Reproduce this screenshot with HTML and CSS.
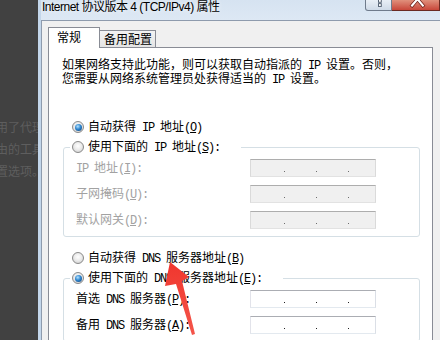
FILE: index.html
```html
<!DOCTYPE html>
<html lang="zh-CN">
<head>
<meta charset="utf-8">
<title>Internet 协议版本 4 (TCP/IPv4) 属性</title>
<link rel="stylesheet" href="styles.css">
</head>
<body>
<div class="screen">
  <div class="bg-strip">
    <p class="bg-line">使用了代理</p>
    <p class="bg-line">自由的工具</p>
    <p class="bg-line">设置选项。</p>
  </div>
  <div class="window">
    <div class="titlebar">
      <span class="title">Internet 协议版本 4 (TCP/IPv4) 属性</span>
      <span class="btn-help"><svg width="27" height="11" viewBox="0 0 27 11"><rect x="13.5" y="-1" width="3" height="3" fill="#fff" stroke="#4d5a6c" stroke-width="1"/><rect x="13.5" y="3.5" width="3" height="3" fill="#fff" stroke="#4d5a6c" stroke-width="1"/></svg></span>
      <span class="btn-close"><svg width="48" height="11" viewBox="0 0 48 11"><path d="M26 -1 L20.5 5.5 M26 -1 L31.5 5.5" stroke="#6b1e16" stroke-width="3.6" stroke-linecap="square" fill="none"/><path d="M26 -1 L20.5 5.5 M26 -1 L31.5 5.5" stroke="#ffffff" stroke-width="2.2" stroke-linecap="square" fill="none"/></svg></span>
    </div>
    <div class="client">
      <div class="tabs">
        <div class="tab-active">常规</div>
        <div class="tab">备用配置</div>
      </div>
      <div class="panel">
        <p class="desc">如果网络支持此功能，则可以获取自动指派的<span class="lat"> IP </span>设置。否则，<br>您需要从网络系统管理员处获得适当的<span class="lat"> IP </span>设置。</p>

        <div class="radio-row first"><span class="radio on"></span><span>自动获得<span class="lat"> IP </span>地址<span class="lat">(<u>O</u>)</span></span></div>

        <fieldset class="group">
          <legend class="legend"><span class="radio"></span><span>使用下面的<span class="lat"> IP </span>地址<span class="lat">(<u>S</u>):</span></span></legend>
          <div class="fields disabled">
            <span class="label"><span class="lat">IP </span>地址<span class="lat">(<u>I</u>):</span></span>
            <span class="ipbox off"><i class="dot"></i><i class="dot"></i><i class="dot"></i></span>
            <span class="label">子网掩码<span class="lat">(<u>U</u>):</span></span>
            <span class="ipbox off"><i class="dot"></i><i class="dot"></i><i class="dot"></i></span>
            <span class="label">默认网关<span class="lat">(<u>D</u>):</span></span>
            <span class="ipbox off"><i class="dot"></i><i class="dot"></i><i class="dot"></i></span>
          </div>
        </fieldset>

        <div class="radio-row second"><span class="radio"></span><span>自动获得<span class="lat"> DNS </span>服务器地址<span class="lat">(<u>B</u>)</span></span></div>

        <fieldset class="group">
          <legend class="legend"><span class="radio on"></span><span>使用下面的<span class="lat"> DNS </span>服务器地址<span class="lat">(<u>E</u>):</span></span></legend>
          <div class="fields">
            <span class="label">首选<span class="lat"> DNS </span>服务器<span class="lat">(<u>P</u>):</span></span>
            <span class="ipbox"><i class="dot"></i><i class="dot"></i><i class="dot"></i></span>
            <span class="label">备用<span class="lat"> DNS </span>服务器<span class="lat">(<u>A</u>):</span></span>
            <span class="ipbox"><i class="dot"></i><i class="dot"></i><i class="dot"></i></span>
          </div>
        </fieldset>
      </div>
    </div>
  </div>
  <svg class="arrow" width="440" height="340" viewBox="0 0 440 340">
    <defs>
      <linearGradient id="ag" x1="0" y1="0" x2="0" y2="1">
        <stop offset="0" stop-color="#f0362e"/>
        <stop offset="1" stop-color="#f4554a"/>
      </linearGradient>
    </defs>
    <polygon points="170,262 189,277 182,281 195,334 192,335 176,284 165,286" fill="url(#ag)"/>
  </svg>
</div>
</body>
</html>
```

FILE: styles.css
```css
html, body {
  margin: 0;
  padding: 0;
}
body {
  width: 440px;
  height: 340px;
  overflow: hidden;
  background: #414141;
  font-family: "Noto Sans CJK SC", sans-serif;
  font-size: 12px;
  color: #000;
}
.screen {
  position: relative;
  display: flex;
  width: 440px;
  height: 340px;
  overflow: hidden;
}
.bg-strip {
  width: 38px;
  flex: none;
  overflow: hidden;
  background: #414141;
  padding-top: 116px;
  box-sizing: border-box;
}
.bg-line {
  margin: 0 0 0 -16px;
  white-space: nowrap;
  font-size: 12px;
  line-height: 22px;
  color: #5e5e5e;
}
.window {
  flex: 1;
  display: flex;
  flex-direction: column;
  border-left: 3px solid #c3d6ea;
  min-width: 0;
}
.titlebar {
  height: 20px;
  flex: none;
  display: flex;
  align-items: flex-start;
  background: linear-gradient(#d6e3f1, #dde8f4);
  padding-left: 1px;
  box-sizing: border-box;
  overflow: hidden;
}
.title {
  font-family: "Liberation Sans", "Noto Sans CJK SC", sans-serif;
  font-size: 12px;
  line-height: 14px;
  letter-spacing: -0.5px;
  white-space: nowrap;
  color: #000;
  text-shadow: 0 0 5px #ffffff;
}
.btn-help {
  margin-left: auto;
  width: 27px;
  height: 11px;
  flex: none;
  box-sizing: border-box;
  border: 1px solid #6f7b8c;
  border-top: none;
  border-radius: 0 0 0 3px;
  background: linear-gradient(#e9eff6, #cfdae7);
  display: flex;
}
.btn-help svg, .btn-close svg {
  display: block;
}
.btn-close {
  width: 48px;
  height: 11px;
  flex: none;
  box-sizing: border-box;
  border: 1px solid #6b2a22;
  border-top: none;
  border-left: none;
  background: linear-gradient(#e0907c, #c8473a);
  display: flex;
}
.client {
  flex: 1;
  display: flex;
  flex-direction: column;
  background: #f0f0f0;
  border-top: 1px solid #8e9bad;
  border-left: 1px solid #8e9bad;
  padding: 6px 0 0 6px;
  min-height: 0;
}
.tabs {
  display: flex;
  align-items: flex-start;
  height: 21px;
  flex: none;
  margin-bottom: -1px;
  position: relative;
  z-index: 1;
}
.tab-active {
  width: 52px;
  height: 21px;
  box-sizing: border-box;
  border: 1px solid #898c95;
  border-bottom: none;
  background: #ffffff;
  padding: 3px 0 0 8px;
  line-height: 12px;
}
.tab {
  width: 56px;
  height: 17px;
  margin-top: 3px;
  box-sizing: border-box;
  border: 1px solid #898c95;
  border-left: none;
  border-bottom: none;
  background: linear-gradient(#f3f3f3, #e4e4e4);
  padding: 2px 0 0 4px;
  line-height: 12px;
}
.panel {
  width: 385px;
  flex: 1;
  box-sizing: border-box;
  background: #ffffff;
  border: 1px solid #898c95;
  border-bottom: none;
}
.desc {
  margin: 10px 0 0 13px;
  line-height: 12px;
  white-space: nowrap;
}
.lat {
  font-family: "Liberation Mono", monospace;
  font-size: 12px;
  letter-spacing: -1.2px;
}
.radio-row {
  display: flex;
  align-items: center;
  gap: 4px;
  height: 16px;
  margin-left: 23px;
  line-height: 12px;
  white-space: nowrap;
}
.radio-row.first {
  margin-top: 33px;
}
.radio-row.second {
  margin-top: 13px;
}
.radio {
  width: 12px;
  height: 12px;
  flex: none;
  box-sizing: border-box;
  border-radius: 50%;
  border: 1px solid #8a8a8a;
  background: radial-gradient(circle at 50% 40%, #ffffff 0%, #ececec 45%, #c9c9c9 100%);
  display: flex;
  align-items: center;
  justify-content: center;
}
.radio.on::after {
  content: "";
  width: 7px;
  height: 7px;
  border-radius: 50%;
  background: radial-gradient(circle at 40% 35%, #b4e3ff 0%, #2f86cf 45%, #0b3a6e 100%);
}
.group {
  margin: 4px 0 0 14px;
  width: 357px;
  box-sizing: border-box;
  border: 1px solid #d5dfe5;
  border-radius: 3px;
  padding: 0 0 6px 0;
  min-width: 0;
}
.legend {
  margin-left: 6px;
  padding: 0 21px 0 2px;
  height: 16px;
  display: flex;
  align-items: center;
  gap: 4px;
  line-height: 12px;
  white-space: nowrap;
}
.fields {
  display: grid;
  grid-template-columns: 174px 126px;
  row-gap: 6px;
  padding: 3px 0 0 12px;
  align-items: center;
}
.label {
  line-height: 18px;
  white-space: nowrap;
}
.fields.disabled .label {
  color: #a2a2a2;
}
.ipbox {
  display: flex;
  width: 126px;
  height: 18px;
  box-sizing: border-box;
  border: 1px solid;
  border-color: #abadb3 #dbdfe6 #e3e9ef #e2e3ea;
  background: #ffffff;
  padding: 11px 0 0 33px;
  gap: 31px;
}
.ipbox.off {
  background: #f0f0f0;
  border-color: #adadad #dadada #e2e2e2 #dadada;
}
.dot {
  display: block;
  width: 1px;
  height: 1px;
  background: #222;
}
.ipbox.off .dot {
  background: #6d6d6d;
}
.arrow {
  position: absolute;
  left: 0;
  top: 0;
  pointer-events: none;
}
```
